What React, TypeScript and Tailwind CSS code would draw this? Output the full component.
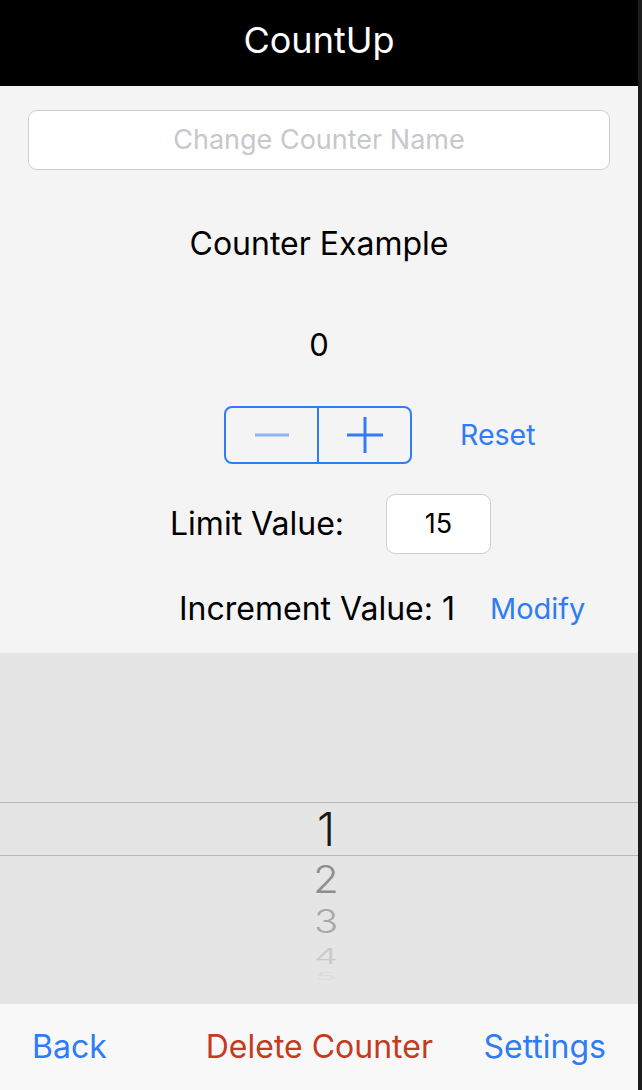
import React from 'react';

const blue = 'text-[#2f7cf6]';

function Stepper() {
  return (
    <div className="flex h-[58px] w-[188px] rounded-[8px] border-2 border-[#2f7cf6]">
      <button className="flex flex-1 items-center justify-center border-r-2 border-[#2f7cf6]">
        <svg width="34" height="4" viewBox="0 0 34 4">
          <rect x="0" y="0.5" width="34" height="3" fill="#8cb6f6" />
        </svg>
      </button>
      <button className="flex flex-1 items-center justify-center">
        <svg width="36" height="36" viewBox="0 0 36 36">
          <rect x="0" y="16.5" width="36" height="3" fill="#2f7cf6" />
          <rect x="16.5" y="0" width="3" height="36" fill="#2f7cf6" />
        </svg>
      </button>
    </div>
  );
}

function Picker() {
  return (
    <div className="flex h-[351px] flex-col bg-[#e5e5e5] font-['Inter',sans-serif] font-light">
      <div className="h-[149px]" />
      <div className="h-px bg-[#b8b8b8]" />
      <div className="flex h-[52px] items-center justify-center pl-[14px] text-[46px] leading-none text-[#1a1a1a]">
        1
      </div>
      <div className="h-px bg-[#b8b8b8]" />
      <div className="flex h-[46px] items-center justify-center pl-[14px] text-[42px] leading-none text-[#8e8e8e] scale-y-[0.92]">
        2
      </div>
      <div className="flex h-[40px] items-center justify-center pl-[14px] text-[40px] leading-none text-[#a9a9a9] scale-y-[0.8]">
        3
      </div>
      <div className="flex h-[28px] items-center justify-center pl-[14px] text-[38px] leading-none text-[#c9c9c9] scale-y-[0.58]">
        4
      </div>
      <div className="flex h-[12px] items-center justify-center pl-[14px] text-[36px] leading-none text-[#dcdcdc] scale-y-[0.28]">
        5
      </div>
    </div>
  );
}

export default function App() {
  return (
    <div className="flex h-[1090px] w-[642px] bg-[#1c1c1c] font-['Inter',sans-serif]">
      <div className="flex w-[638px] flex-col">
        <header className="flex h-[86px] items-center justify-center bg-black pb-[6px] text-[36px] text-white">
          CountUp
        </header>

        <main className="flex h-[567px] flex-col bg-[#f4f4f4]">
          <div className="mx-[28px] mt-[24px] flex h-[60px] items-center justify-center rounded-[9px] border border-[#cfcfcf] bg-white text-[27px] text-[#c7c7cd]">
            Change Counter Name
          </div>

          <div className="mt-[54px] flex h-[40px] items-center justify-center text-[32px] text-black">
            Counter Example
          </div>

          <div className="mt-[61px] flex h-[40px] items-center justify-center text-[31px] text-black">
            0
          </div>

          <div className="mt-[41px] flex items-center gap-[48px] pl-[224px]">
            <Stepper />
            <button className={`text-[28.5px] ${blue}`}>Reset</button>
          </div>

          <div className="mt-[30px] flex items-center gap-[42px] pl-[170px]">
            <span className="text-[32px] text-black">Limit Value:</span>
            <div className="flex h-[60px] w-[105px] items-center justify-center rounded-[9px] border border-[#cfcfcf] bg-white text-[27px] text-black">
              15
            </div>
          </div>

          <div className="mt-[31px] flex items-center gap-[35px] pl-[179px]">
            <span className="text-[32px] text-black">Increment Value: 1</span>
            <button className={`text-[29px] ${blue}`}>Modify</button>
          </div>
        </main>

        <Picker />

        <footer className="flex h-[86px] items-center bg-[#f8f8f8] px-[32px] text-[32px]">
          <button className={blue}>Back</button>
          <button className="ml-[99px] text-[#c53a20]">Delete Counter</button>
          <button className={`ml-auto ${blue}`}>Settings</button>
        </footer>
      </div>
      <div className="flex-1" />
    </div>
  );
}
